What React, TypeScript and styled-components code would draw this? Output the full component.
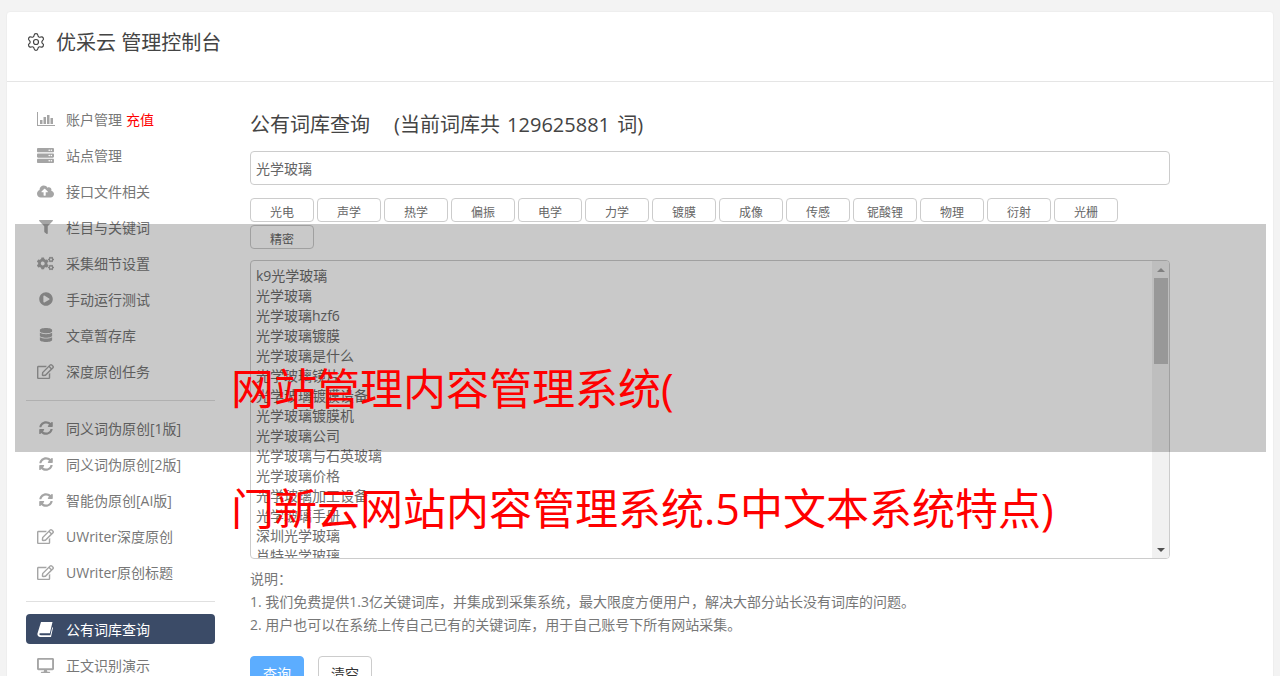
import React from "react";
import styled, {createGlobalStyle} from "styled-components";
import {Settings} from "lucide-react";
import {
    FaCloudUploadAlt,
    FaCogs,
    FaDatabase,
    FaDesktop,
    FaFilter,
    FaPlayCircle,
    FaRegEdit,
    FaServer,
    FaSyncAlt
} from "react-icons/fa";

const GlobalStyle = createGlobalStyle`
  html, body {
    margin: 0;
    height: 100%;
    overflow: hidden;
    background: #f3f3f3;
    font-family: "Open Sans", "Noto Sans CJK SC", sans-serif;
    color: #676a6c;
  }
`

const Page = styled.div`
  position: relative;
  height: 676px;
  padding: 11px 6px 0;
  box-sizing: border-box;
  overflow: hidden;
`

const Card = styled.div`
  background: #fff;
  border: 1px solid #eee;
  border-radius: 4px;
  height: 720px;
  box-sizing: border-box;
`

const CardHeader = styled.div`
  height: 70px;
  box-sizing: border-box;
  display: flex;
  align-items: center;
  padding: 0 0 10px 19px;
  gap: 10px;
  border-bottom: 1px solid #e5e5e5;
  font-size: 20px;
  color: #444;
`

const CardBody = styled.div`
  display: flex;
`

const Sidebar = styled.div`
  width: 189px;
  margin-left: 19px;
  padding-top: 22px;
  flex-shrink: 0;
`

const NavGroup = styled.div`
  display: flex;
  flex-direction: column;
  gap: 6px;
`

const NavDivider = styled.div`
  height: 1px;
  background: #e0e0e0;
  margin: 14px 0 12px;
`

const NavItem = styled.div<{ $active?: boolean }>`
  height: 30px;
  display: flex;
  align-items: center;
  border-radius: 4px;
  font-size: 14px;
  color: ${p => p.$active ? "#fff" : "#777"};
  background: ${p => p.$active ? "#3b4b67" : "transparent"};
`

const NavIcon = styled.span<{ $active?: boolean, $small?: boolean }>`
  width: 40px;
  padding-left: ${p => p.$small ? "13px" : "11px"};
  box-sizing: border-box;
  display: flex;
  align-items: center;
  color: ${p => p.$active ? "#fff" : "#a5a5a5"};
  font-size: ${p => p.$small ? "14px" : "17px"};
`

const Recharge = styled.span`
  color: #f00;
  margin-left: 4px;
`

const Main = styled.div`
  width: 920px;
  margin-left: 35px;
  padding-top: 28px;
`

const Title = styled.div`
  font-size: 20px;
  line-height: 30px;
  color: #444;
  display: flex;
  gap: 24px;
  word-spacing: 2px;
`

const SearchInput = styled.div`
  margin-top: 11px;
  height: 34px;
  box-sizing: border-box;
  border: 1px solid #ccc;
  border-radius: 4px;
  padding: 0 5px;
  display: flex;
  align-items: center;
  font-size: 14px;
  color: #666;
`

const TagList = styled.div`
  margin-top: 13px;
  display: flex;
  flex-wrap: wrap;
  gap: 3px;
`

const Tag = styled.div`
  width: 64px;
  height: 24px;
  box-sizing: border-box;
  border: 1px solid #ccc;
  border-radius: 4px;
  display: flex;
  align-items: center;
  justify-content: center;
  padding-top: 3px;
  font-size: 12px;
  color: #666;
`

const WordBox = styled.div`
  margin-top: 11px;
  height: 299px;
  box-sizing: border-box;
  border: 1px solid #ccc;
  border-radius: 4px;
  display: flex;
  overflow: hidden;
`

const WordList = styled.div`
  flex: 1;
  padding: 5px 5px 0;
  font-size: 14px;
  line-height: 20px;
  color: #6e6e6e;
  overflow: hidden;
`

const Scrollbar = styled.div`
  width: 17px;
  flex-shrink: 0;
  background: #f1f1f1;
  display: flex;
  flex-direction: column;
  align-items: center;
`

const ScrollArrow = styled.div<{ $down?: boolean }>`
  height: 17px;
  flex-shrink: 0;
  display: flex;
  align-items: center;
  justify-content: center;

  &::after {
    content: "";
    border-left: 4px solid transparent;
    border-right: 4px solid transparent;
    border-bottom: ${p => p.$down ? "0" : "4px solid #a3a3a3"};
    border-top: ${p => p.$down ? "4px solid #505050" : "0"};
  }
`

const ScrollThumb = styled.div`
  width: 14px;
  height: 86px;
  background: #c1c1c1;
`

const ScrollSpace = styled.div`
  flex: 1;
`

const Notes = styled.div`
  margin-top: 8px;
  font-size: 14px;
  line-height: 23px;
  color: #777;
`

const ButtonRow = styled.div`
  margin-top: 20px;
  display: flex;
  gap: 14px;
`

const Button = styled.div<{ $primary?: boolean }>`
  width: 54px;
  height: 34px;
  box-sizing: border-box;
  border: 1px solid ${p => p.$primary ? "#5cadff" : "#ccc"};
  border-radius: 4px;
  background: ${p => p.$primary ? "#5cadff" : "#fff"};
  color: ${p => p.$primary ? "#fff" : "#333"};
  font-size: 14px;
  display: flex;
  align-items: center;
  justify-content: center;
`

const Overlay = styled.div`
  position: absolute;
  left: 15px;
  top: 224px;
  width: 1251px;
  height: 228px;
  background: rgba(0, 0, 0, 0.21);
  padding: 105px 0 0 216px;
  box-sizing: border-box;
`

const OverlayLine = styled.div`
  font-size: 43px;
  line-height: 120px;
  color: #f00;
  white-space: nowrap;
`

const ChartIcon = () => (
    <svg width="18" height="14" viewBox="0 0 18 14" fill="currentColor">
        <path d="M0 0h1v13h17v1H0z"/>
        <path d="M3 8h2.500v4H3zM6.500 5H9v7H6.500zM10 3h2.500v9H10zM13.500 6H16v6h-2.500z"/>
    </svg>
)

const BookIcon = () => (
    <svg width="16" height="15" viewBox="0 0 16 15" fill="currentColor">
        <path d="M4 0h11.500l-2.600 11.300H3.600c-1 0-1.300.5-1.200 1 .1.500.6.900 1.300.9h9.700l1.800-8 .8.500-2 9.300H3.300C1.500 15 .2 13.500.4 11.700z"/>
    </svg>
)

const navTop = [
    {icon: <ChartIcon/>, label: "账户管理", recharge: true},
    {icon: <FaServer/>, label: "站点管理"},
    {icon: <FaCloudUploadAlt/>, label: "接口文件相关"},
    {icon: <FaFilter/>, label: "栏目与关键词", small: true},
    {icon: <FaCogs/>, label: "采集细节设置"},
    {icon: <FaPlayCircle/>, label: "手动运行测试", small: true},
    {icon: <FaDatabase/>, label: "文章暂存库", small: true},
    {icon: <FaRegEdit/>, label: "深度原创任务"}
]

const navMiddle = [
    {icon: <FaSyncAlt/>, label: "同义词伪原创[1版]", small: true},
    {icon: <FaSyncAlt/>, label: "同义词伪原创[2版]", small: true},
    {icon: <FaSyncAlt/>, label: "智能伪原创[AI版]", small: true},
    {icon: <FaRegEdit/>, label: "UWriter深度原创"},
    {icon: <FaRegEdit/>, label: "UWriter原创标题"}
]

const tags = ["光电", "声学", "热学", "偏振", "电学", "力学", "镀膜", "成像", "传感", "铌酸锂", "物理", "衍射", "光栅", "精密"]

const words = [
    "k9光学玻璃", "光学玻璃", "光学玻璃hzf6", "光学玻璃镀膜", "光学玻璃是什么", "光学玻璃镜片", "光学玻璃镀膜设备",
    "光学玻璃镀膜机", "光学玻璃公司", "光学玻璃与石英玻璃", "光学玻璃价格", "光学玻璃加工设备", "光学玻璃手册",
    "深圳光学玻璃", "肖特光学玻璃"
]

const App = () => {
    return (
        <Page>
            <GlobalStyle/>
            <Card>
                <CardHeader>
                    <Settings size={20} strokeWidth={1.4}/>
                    优采云 管理控制台
                </CardHeader>
                <CardBody>
                    <Sidebar>
                        <NavGroup>
                            {navTop.map(item => (
                                <NavItem key={item.label}>
                                    <NavIcon $small={item.small}>{item.icon}</NavIcon>
                                    {item.label}
                                    {item.recharge && <Recharge>充值</Recharge>}
                                </NavItem>
                            ))}
                        </NavGroup>
                        <NavDivider/>
                        <NavGroup>
                            {navMiddle.map(item => (
                                <NavItem key={item.label}>
                                    <NavIcon $small={item.small}>{item.icon}</NavIcon>
                                    {item.label}
                                </NavItem>
                            ))}
                        </NavGroup>
                        <NavDivider/>
                        <NavGroup>
                            <NavItem $active>
                                <NavIcon $active><BookIcon/></NavIcon>
                                公有词库查询
                            </NavItem>
                            <NavItem>
                                <NavIcon><FaDesktop/></NavIcon>
                                正文识别演示
                            </NavItem>
                        </NavGroup>
                    </Sidebar>
                    <Main>
                        <Title>
                            <span>公有词库查询</span>
                            <span>(当前词库共 129625881 词)</span>
                        </Title>
                        <SearchInput>光学玻璃</SearchInput>
                        <TagList>
                            {tags.map(tag => <Tag key={tag}>{tag}</Tag>)}
                        </TagList>
                        <WordBox>
                            <WordList>
                                {words.map(word => <div key={word}>{word}</div>)}
                            </WordList>
                            <Scrollbar>
                                <ScrollArrow/>
                                <ScrollThumb/>
                                <ScrollSpace/>
                                <ScrollArrow $down/>
                            </Scrollbar>
                        </WordBox>
                        <Notes>
                            <div>说明：</div>
                            <div>1. 我们免费提供1.3亿关键词库，并集成到采集系统，最大限度方便用户，解决大部分站长没有词库的问题。</div>
                            <div>2. 用户也可以在系统上传自己已有的关键词库，用于自己账号下所有网站采集。</div>
                        </Notes>
                        <ButtonRow>
                            <Button $primary>查询</Button>
                            <Button>清空</Button>
                        </ButtonRow>
                    </Main>
                </CardBody>
            </Card>
            <Overlay>
                <OverlayLine>网站管理内容管理系统(</OverlayLine>
                <OverlayLine>门新云网站内容管理系统.5中文本系统特点)</OverlayLine>
            </Overlay>
        </Page>
    )
}
export default App
